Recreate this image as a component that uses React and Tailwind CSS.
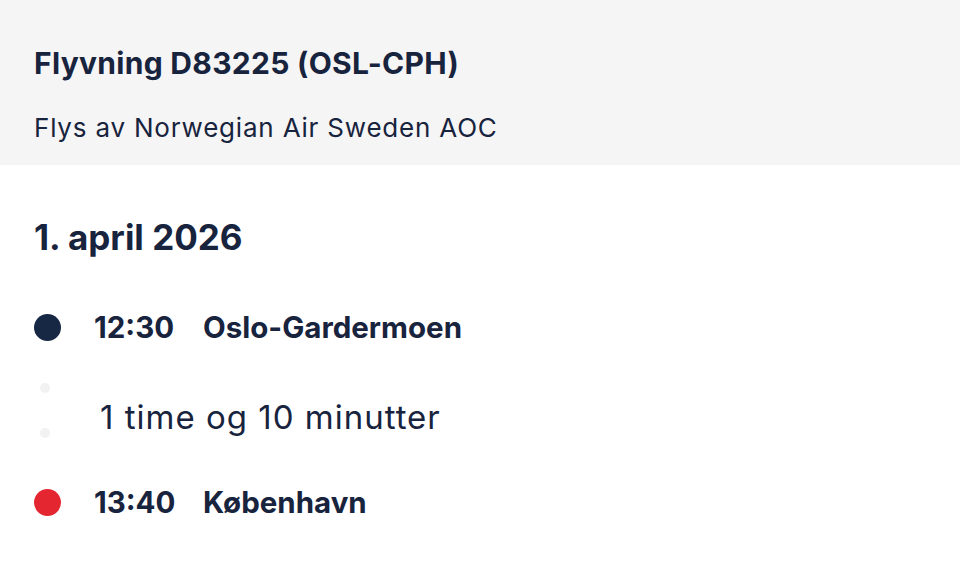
export default function App() {
  return (
    <div className="w-[960px] h-[587px] bg-white text-[#18233d] overflow-hidden" style={{ fontFamily: "Inter, 'Noto Sans', sans-serif" }}>
      <div className="bg-[#f5f5f5] h-[165px] px-[34px] pt-[45px]">
        <h1 className="text-[30px] leading-[36px] font-bold tracking-[0.3px]">Flyvning D83225 (OSL-CPH)</h1>
        <p className="mt-[31px] text-[26px] leading-[32px] tracking-[0.8px]">Flys av Norwegian Air Sweden AOC</p>
      </div>
      <div className="px-[34px] pt-[52px]">
        <h2 className="text-[35px] leading-[40px] font-bold">1. april 2026</h2>
        <div className="mt-[52px] flex items-center h-[36px]">
          <div className="w-[27px] h-[27px] rounded-full bg-[#172845]" />
          <span className="ml-[33px] w-[109px] text-[29.5px] font-bold">12:30</span>
          <span className="text-[29.5px] font-bold">Oslo-Gardermoen</span>
        </div>
        <div className="flex items-start h-[139px]">
          <div className="w-[27px] flex flex-col items-center pt-[38px] gap-[35px]">
            <div className="w-[10px] h-[10px] rounded-full bg-[#f2f2f2] mr-[6px]" />
            <div className="w-[10px] h-[10px] rounded-full bg-[#f2f2f2] mr-[6px]" />
          </div>
          <span className="ml-[39px] mt-[52px] text-[33px] leading-[40px] tracking-[1px]">1 time og 10 minutter</span>
        </div>
        <div className="flex items-center h-[36px]">
          <div className="w-[27px] h-[27px] rounded-full bg-[#e3262f]" />
          <span className="ml-[33px] w-[109px] text-[29.5px] font-bold">13:40</span>
          <span className="text-[29.5px] font-bold">København</span>
        </div>
      </div>
    </div>
  );
}
